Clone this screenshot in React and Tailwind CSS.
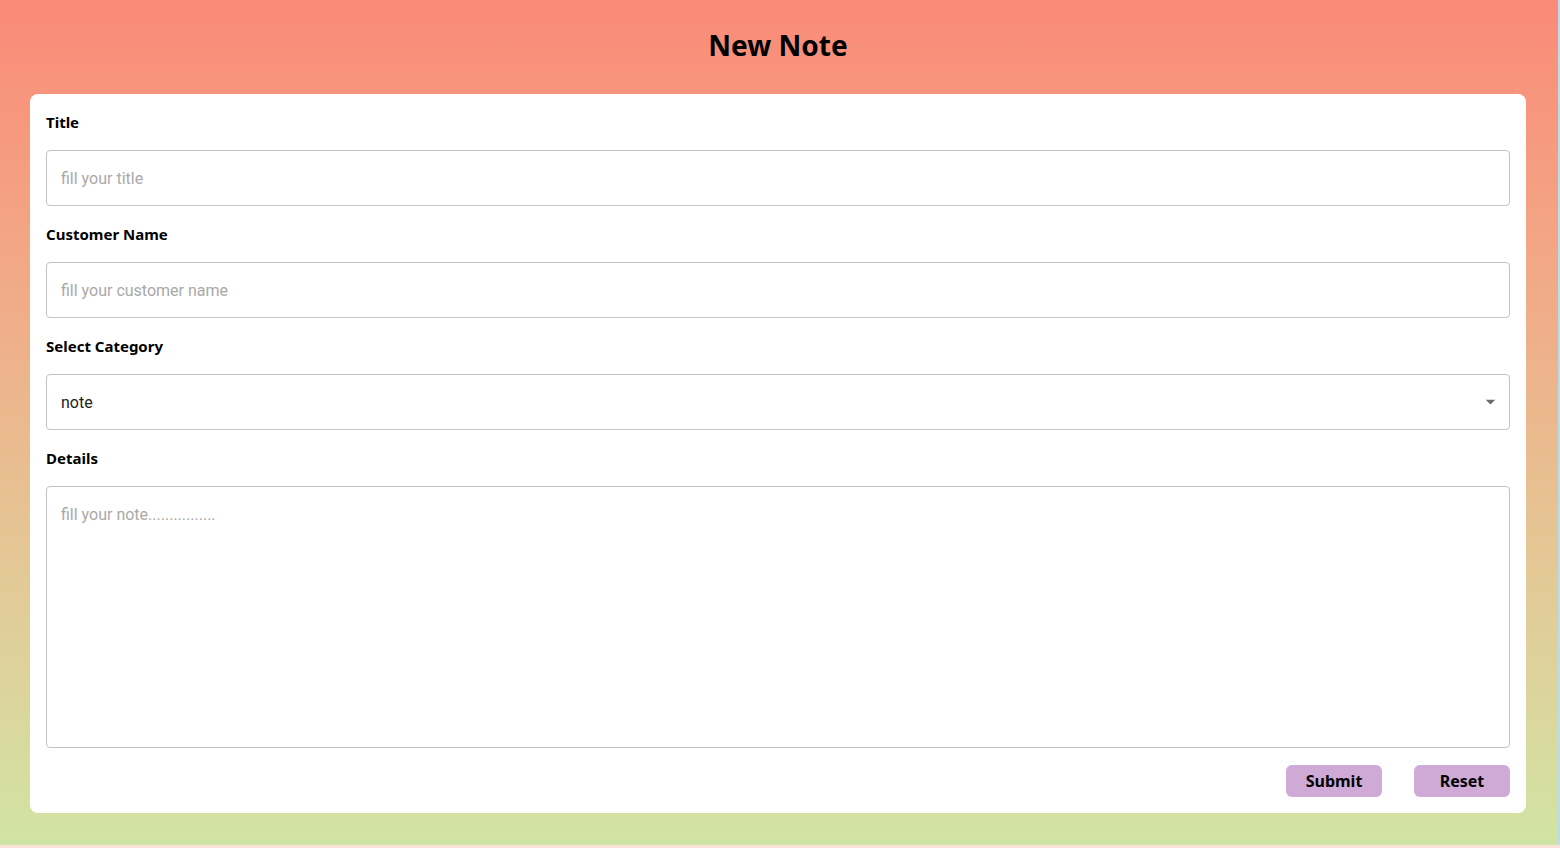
import { useState } from "react";

const Field = ({ label, children }) => (
  <div>
    <div className="h-14 flex items-center text-[15px] font-bold text-black">{label}</div>
    {children}
  </div>
);

export default function App() {
  const [category, setCategory] = useState("note");

  return (
    <div className="h-[848px] w-full bg-[#fbe3da]" style={{ fontFamily: '"Noto Sans", "Open Sans", sans-serif' }}>
      <div className="h-[845px] w-[1560px] border-r-2 border-[#bcdde8] bg-gradient-to-b from-[#fa8a78] to-[#d1e4a3] pl-[30px] pr-[32px]">
        <h1 className="h-[94px] flex items-center justify-center text-[28px] font-bold text-black pb-1">New Note</h1>

        <form className="bg-white rounded-lg px-4 pb-4" onSubmit={(e) => e.preventDefault()}>
          <Field label="Title">
            <input
              placeholder="fill your title"
              className="w-full h-14 border border-[#c4c4c4] rounded px-[14px] text-base text-[#333] placeholder:text-[#a9a9a9] outline-none"
              style={{ fontFamily: "Roboto, Arial, sans-serif" }}
            />
          </Field>

          <Field label="Customer Name">
            <input
              placeholder="fill your customer name"
              className="w-full h-14 border border-[#c4c4c4] rounded px-[14px] text-base text-[#333] placeholder:text-[#a9a9a9] outline-none"
              style={{ fontFamily: "Roboto, Arial, sans-serif" }}
            />
          </Field>

          <Field label="Select Category">
            <div className="relative">
              <select
                value={category}
                onChange={(e) => setCategory(e.target.value)}
                className="appearance-none w-full h-14 border border-[#c4c4c4] rounded px-[14px] pt-px text-base text-[#222] bg-white outline-none"
                style={{ fontFamily: "Roboto, Arial, sans-serif" }}
              >
                <option value="note">note</option>
                <option value="reminder">reminder</option>
                <option value="todo">todo</option>
              </select>
              <svg className="absolute right-[14px] top-1/2 -translate-y-1/2 pointer-events-none" width="11" height="5" viewBox="0 0 10 5">
                <path d="M0 0 L10 0 L5 5 Z" fill="#6b6b6b" />
              </svg>
            </div>
          </Field>

          <Field label="Details">
            <textarea
              placeholder="fill your note................"
              className="block w-full h-[262px] border border-[#c4c4c4] rounded px-[14px] py-[16px] text-base text-[#333] placeholder:text-[#a9a9a9] outline-none resize-none"
              style={{ fontFamily: "Roboto, Arial, sans-serif" }}
            />
          </Field>

          <div className="flex justify-end gap-8 mt-[17px]">
            <button type="submit" className="w-24 h-8 rounded-md bg-[#cfaad6] text-base font-bold text-black">
              Submit
            </button>
            <button type="reset" className="w-24 h-8 rounded-md bg-[#cfaad6] text-base font-bold text-black">
              Reset
            </button>
          </div>
        </form>
      </div>
    </div>
  );
}
